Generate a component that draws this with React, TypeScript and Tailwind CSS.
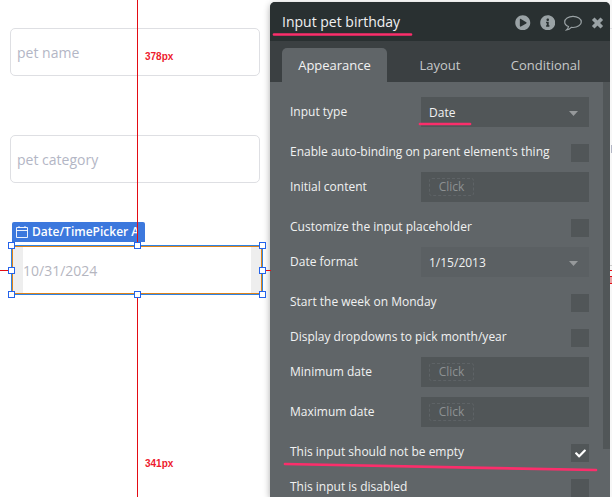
import type { ReactNode } from "react";
import { FaPlayCircle, FaInfoCircle, FaCheck } from "react-icons/fa";

function Row({ label, h, children }: { label: string; h: string; children: ReactNode }) {
  return (
    <div className={`flex justify-between shrink-0 ${h}`}>
      <span className="pt-[6px] leading-[18px] whitespace-nowrap">{label}</span>
      {children}
    </div>
  );
}

function Check({ on = false }: { on?: boolean }) {
  return (
    <span className="mt-[7px] flex size-[18px] shrink-0 items-center justify-center bg-[#515658] text-white">
      {on && <FaCheck size={11} />}
    </span>
  );
}

function Select({ value, soft = false }: { value: string; soft?: boolean }) {
  return (
    <div className={`flex h-[30px] w-[168px] items-center justify-between pr-[11px] pl-2 ${soft ? "bg-[#5b6063]" : "bg-[#515658]"}`}>
      <span className="pt-px">{value}</span>
      <svg className="mt-[2px] h-[5px] w-[9px]" viewBox="0 0 9 5"><path d="M0 0h9L4.5 5z" fill="#96999b" /></svg>
    </div>
  );
}

function Composer() {
  return (
    <div className="flex h-[30px] w-[168px] items-center bg-[#515658] pl-2">
      <span className="flex h-[18px] w-[45px] items-center justify-center rounded-[3px] border border-dashed border-[#5e6366] text-[#8d9192]">Click</span>
    </div>
  );
}

function Handle({ at }: { at: string }) {
  return <i className={`absolute size-[7px] border border-[#2463eb] bg-white ${at}`} />;
}

export default function App() {
  return (
    <div className="relative flex h-[497px] w-[612px] overflow-hidden bg-white font-['Open_Sans','Noto_Sans',sans-serif]">
      <main className="flex w-[270px] shrink-0 flex-col pt-7 pl-[10px] text-[14px] text-[#b3b6c5]">
        <div className="flex h-12 w-[250px] shrink-0 items-center rounded-[5px] border border-[#dedfe3] pl-[6px]">pet name</div>
        <div className="mt-[59px] flex h-12 w-[250px] shrink-0 items-center rounded-[5px] border border-[#dedfe3] pl-[6px]">pet category</div>
        <div className="mt-[39px] ml-[2px] flex h-5 w-[133px] shrink-0 items-center gap-1 overflow-hidden rounded-t-[2px] bg-[#3c78dd] pl-1 text-[12px] font-semibold whitespace-nowrap text-white">
          <svg className="size-3 shrink-0" viewBox="0 0 12 12" fill="none" stroke="white"><path d="M.5 1.5h11v10H.5zM.5 4.5h11M3 0v2M9 0v2" strokeWidth=".9" /></svg>
          <span className="w-[106px] overflow-hidden">Date/TimePicker A</span>
        </div>
        <div className="mt-[3px] ml-px h-[50px] w-[252px] shrink-0 border border-[#2f83e2]">
          <div className="flex h-full items-center border border-[#df8319] bg-white">
            <i className="h-full w-[10px] bg-[#eee]" />
            <span className="flex-1 text-[#b5b6bf]">10/31/2024</span>
            <i className="h-full w-[10px] bg-[#eee]" />
          </div>
        </div>
      </main>
      <div className="absolute top-0 left-[137px] h-[245px] w-px bg-[#e40b13]" />
      <div className="absolute top-[295px] left-[137px] h-[202px] w-px bg-[#e40b13]" />
      <div className="absolute top-[270px] left-0 h-px w-2 bg-[#e40b13]" />
      <div className="absolute top-[270px] left-[263px] h-px w-2 bg-[#e40b13]" />
      <b className="absolute top-[51px] left-[145px] font-['Liberation_Sans',sans-serif] text-[10px] leading-3 text-[#ed1b2e]">378px</b>
      <b className="absolute top-[458px] left-[145px] font-['Liberation_Sans',sans-serif] text-[10px] leading-3 text-[#ed1b2e]">341px</b>
      <Handle at="left-2 top-[242px]" /><Handle at="left-[134px] top-[242px]" /><Handle at="left-[259px] top-[242px]" />
      <Handle at="left-2 top-[267px]" /><Handle at="left-[259px] top-[267px]" />
      <Handle at="left-2 top-[291px]" /><Handle at="left-[134px] top-[291px]" /><Handle at="left-[259px] top-[291px]" />

      <section className="mt-[2px] flex h-[495px] w-[340px] shrink-0 flex-col overflow-hidden rounded-t-[5px] bg-[#606568] text-[12px] text-[#f1f2f2] shadow-[0_2px_7px_#0005]">
        <header className="flex h-[39px] shrink-0 items-center justify-between bg-[#293031] pr-[6px] pl-3 text-[#9aa2a5]">
          <span className="text-[14px] text-[#f0f1f1]">Input pet birthday</span>
          <div className="flex items-center gap-[9px] pt-[2px]">
            <FaPlayCircle size={15.5} /><FaInfoCircle size={15.5} />
            <svg className="h-4 w-[18px]" viewBox="0 0 18 16" fill="none" stroke="currentColor" strokeWidth="1.2"><path d="M4.5 11.5C2 10.5.7 8.8.7 6.9.7 3.8 4.4 1.3 9 1.3s8.3 2.5 8.3 5.6-3.7 5.6-8.3 5.6l-1.7-.1C6 13.8 4.3 14.8 2.5 15c1-.9 1.8-2 2-3.5z" /></svg>
            <svg className="h-3 w-[13px]" viewBox="0 0 13 12"><path d="M2.2 1.7l8.6 8.6M10.8 1.7l-8.6 8.6" stroke="currentColor" strokeWidth="3.7" /></svg>
          </div>
        </header>
        <nav className="flex h-[41px] shrink-0 bg-[#3b4042] pt-[7px] pl-3 text-[13px] text-[#c6c8c9]">
          <span className="flex w-[105px] items-center justify-center rounded-t-[5px] bg-[#606568] pt-[2px] text-[#f2f2f2]">Appearance</span>
          <span className="flex w-[106px] items-center justify-center pt-[2px]">Layout</span>
          <span className="flex w-[105px] items-center justify-center pt-[2px]">Conditional</span>
        </nav>
        <div className="flex min-h-0 flex-1 justify-between pl-5">
          <div className="flex w-[299px] flex-col pt-[15px]">
            <Row label="Input type" h="h-10"><Select value="Date" /></Row>
            <Row label="Enable auto-binding on parent element's thing" h="h-[35px]"><Check /></Row>
            <Row label="Initial content" h="h-10"><Composer /></Row>
            <Row label="Customize the input placeholder" h="h-[35px]"><Check /></Row>
            <Row label="Date format" h="h-10"><Select value="1/15/2013" soft /></Row>
            <Row label="Start the week on Monday" h="h-[35px]"><Check /></Row>
            <Row label="Display dropdowns to pick month/year" h="h-[35px]"><Check /></Row>
            <Row label="Minimum date" h="h-10"><Composer /></Row>
            <Row label="Maximum date" h="h-10"><Composer /></Row>
            <Row label="This input should not be empty" h="h-[35px]"><Check on /></Row>
            <Row label="This input is disabled" h="h-[35px]"><Check /></Row>
          </div>
          <div className="h-[367px] w-[7px] bg-[#515658]" />
        </div>
      </section>
      <svg className="absolute inset-0" width="612" height="497" fill="none" stroke="#fb2e6b" strokeWidth="2.7" strokeLinecap="round"><path d="M274 34.5H411M420 124H470M285 464Q450 467 596 470" /></svg>
      <aside className="flex w-[2px] flex-col bg-[#f7f7f7] pt-[28px]">
        <i className="h-px bg-[#dedfe3]" />
        <i className="mt-[116px] ml-px h-2 border-l border-[#b3b6c5]" />
        <i className="mt-[112px] h-px bg-[#ccc]" />
        <i className="mt-1 h-px bg-[#e40b13]" />
        <i className="mt-[5px] h-2 border-y border-[#e40b13] bg-[#e9a4a7]" />
      </aside>
    </div>
  );
}
